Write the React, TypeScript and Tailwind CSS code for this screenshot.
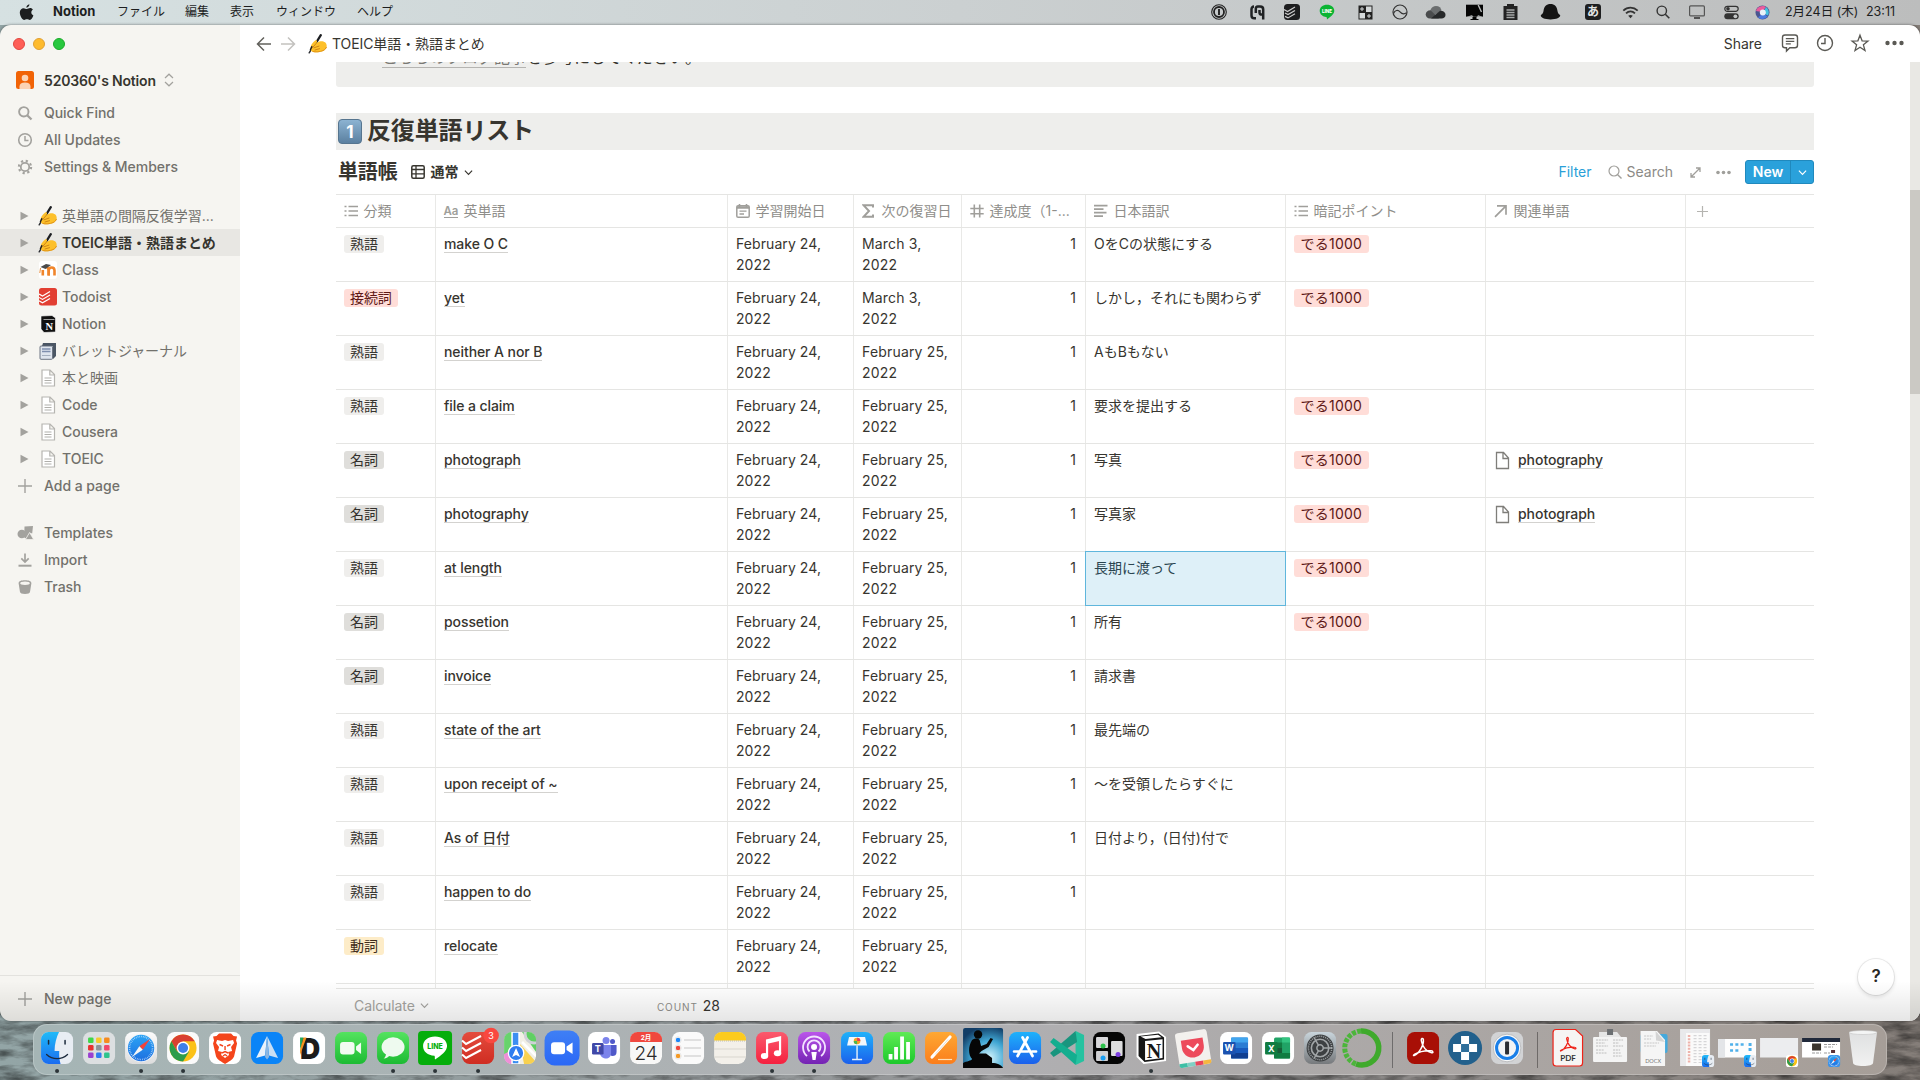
import React from 'react';

/* ---------- shared bits ---------- */

const P = (props: { children: React.ReactNode; w?: number; h?: number; vb?: string; className?: string }) => (
  <svg
    width={props.w ?? 18}
    height={props.h ?? 18}
    viewBox={props.vb ?? '0 0 18 18'}
    fill="none"
    className={`shrink-0 ${props.className ?? ''}`}
  >
    {props.children}
  </svg>
);

const Chevron = ({ w = 9, className = '' }: { w?: number; className?: string }) => (
  <P w={w} h={w} vb="0 0 10 10" className={className}>
    <path d="M1 3l4 4 4-4" stroke="currentColor" strokeWidth="1.3" />
  </P>
);

const WritingHand = () => (
  <P w={19} h={20} vb="0 0 19 20">
    <path d="M12.800 1.200L7 10.500" stroke="#1d1f23" strokeWidth="2.300" strokeLinecap="round" />
    <path d="M6 11L1.200 18.800" stroke="#2e3035" strokeWidth="1.500" strokeLinecap="round" />
    <path d="M2.600 13.500C2.800 11 4.800 8.300 7.200 6.600c1-.7 2.200 0 1.800 1.100l-.6 1.300 3-1.500c3.500-.9 7.300.5 7.300 4.200 0 2.600-1.400 4.300-3.600 5.200-3.300 1.400-7.300 1.700-10 1.100-1.800-.4-2.800-2-2.500-4.500z" fill="#fdc02a" />
    <path d="M8.300 9.300l-3.600 4.200M6 13.800l5-1.700M7 16l4.500-1.300" stroke="#c97f12" strokeWidth=".9" strokeLinecap="round" />
    <path d="M4.500 17.400c3 .9 7.500.5 10.500-.8 1.800-.8 3-2.100 3.500-3.700" stroke="#e09416" strokeWidth="1" />
    <path d="M4 12.300L2.300 16" stroke="#1d1f23" strokeWidth="1.500" />
  </P>
);

const Keycap = () => (
  <P w={24} h={25} vb="0 0 24 25">
    <defs>
      <linearGradient id="kc" x1="0" y1="0" x2="0" y2="1">
        <stop offset="0" stopColor="#8db4d3" />
        <stop offset="1" stopColor="#5a7f9f" />
      </linearGradient>
    </defs>
    <rect x=".5" y=".5" width="23" height="24" rx="3.500" fill="url(#kc)" stroke="#56758f" />
    <text x="12" y="18.500" textAnchor="middle" fontSize="17" fontWeight="700" fill="#fff" fontFamily="Inter">1</text>
  </P>
);

/* ---------- menu bar ---------- */

const statusIcons: { cell: string; icon: React.ReactNode }[] = [
  { cell: 'w-[38px]', icon: <P w={16} h={16} vb="0 0 16 16"><circle cx="8" cy="8" r="7.300" stroke="#222" strokeWidth="1.100" /><circle cx="8" cy="8" r="5" stroke="#222" strokeWidth="1.800" /><path d="M8 5v6" stroke="#222" strokeWidth="1.900" /></P> },
  { cell: 'w-[38px]', icon: <P w={15} h={15} vb="0 0 15 15"><path d="M6 13.300H4.300c-1.800 0-2.800-.9-2.800-2.800V4.300c0-1.700 1-2.700 2.500-2.700M5.800 8V3.500M5.800 4c0-1.500.9-2.400 2-2.400h2.400c2 0 3 1 3 2.900V14.500M9.500 5v2.500c0 1.500.9 2.100 2.300 2.100h1" stroke="#202224" strokeWidth="2.500" /></P> },
  { cell: 'w-[31px]', icon: <P w={16} h={16} vb="0 0 16 16"><rect width="16" height="16" rx="3.500" fill="#1d1e1f" /><path d="M0 5.500l3.500 2L11 3M1 9l3 1.600L11 6.400M1 12.400l3 1.500L11 9.700" stroke="#ccc" strokeWidth="1.200" /></P> },
  { cell: 'w-[40px]', icon: <P w={16} h={16} vb="0 0 16 16"><path d="M8 .8c4.200 0 7.300 2.600 7.300 6 0 3.600-4 6-7.300 8.600-.3-.9.200-1.500-.4-2.200C3.500 12.700.7 10.200.7 6.800c0-3.400 3.100-6 7.300-6z" fill="#0bb433" /><text x="8" y="8.700" fontSize="4.600" fontWeight="800" fill="#fff" textAnchor="middle" fontFamily="Inter">LINE</text></P> },
  { cell: 'w-[37px]', icon: <P w={15} h={15} vb="0 0 15 15"><rect x=".5" y=".5" width="14" height="14" fill="#222" /><rect x="8" y="1.500" width="5.500" height="5.500" fill="#d5d9da" /><rect x="1.500" y="8" width="5.500" height="5.500" fill="#d5d9da" /><path d="M2 4h4M4 2v4M9 11h4M11 9v4" stroke="#d5d9da" strokeWidth="1" /></P> },
  { cell: 'w-[31px]', icon: <P w={16} h={16} vb="0 0 16 16"><circle cx="8" cy="8" r="7" stroke="#333" strokeWidth="1.200" /><path d="M1.500 9.500C3 6 6 5.500 8 7.800s4.300 2.500 6.500 1" stroke="#333" strokeWidth="1.200" /></P> },
  { cell: 'w-[40px]', icon: <P w={21} h={14} vb="0 0 21 14"><path d="M6 10.500C3.500 7 6 1 11 1c3.200 0 5 2 5.500 4.300L10 10z" fill="#6b6e6f" /><path d="M5 13.500c-2.600 0-4.300-1.700-4.300-4 0-2.600 2-4.200 4.800-4.200L14 13.500z" fill="#4a4c4d" /><path d="M6 13.500l9-7.800c3 0 5.500 1.400 5.500 4.200 0 2.100-1.700 3.600-4 3.600z" fill="#262829" /></P> },
  { cell: 'w-[38px]', icon: <P w={19} h={16} vb="0 0 19 16"><path d="M1 .7h17v12H1z" fill="#050505" /><path d="M12 2l4.500 9M7.500 12.700h4V15h2v1h-8v-1h2z" fill="#050505" /><path d="M13.200 1l3.300 7" stroke="#b8bbbb" strokeWidth="1.400" /><path d="M1 12.800l6-1.500 1.500 1.500zM18 12.800l-5-1.500-1 1.500z" fill="#c3c6c6" /></P> },
  { cell: 'w-[34px]', icon: <P w={15} h={16} vb="0 0 15 16"><path d="M.5 2h14v14H.5z" fill="#222" /><rect x="4" y="0" width="7" height="4" fill="#222" /><path d="M3.500 6h8M3.500 8.500h8M3.500 11h8M3.500 13.500h8" stroke="#a5a8a8" strokeWidth="1.300" /></P> },
  { cell: 'w-[47px]', icon: <P w={21} h={16} vb="0 0 21 16"><path d="M10.500 0c4 0 6.500 2.500 7 7 .2 2 1.200 3 2.700 4.300.5 2.200-4 4.200-9.700 4.200S.3 13.500.8 11.300C2.300 10 3.300 9 3.500 7c.5-4.500 3-7 7-7z" fill="#141414" /></P> },
  { cell: 'w-[38px]', icon: <P w={16} h={16} vb="0 0 16 16"><rect width="16" height="16" rx="3" fill="#1e1f20" /><text x="8" y="12.300" textAnchor="middle" fontSize="12" fontWeight="700" fill="#e3e5e5" fontFamily="Noto Sans CJK JP">あ</text></P> },
  { cell: 'w-[36px]', icon: <P w={17} h={13} vb="0 0 17 13"><path d="M1.300 4.600c4.200-4 10.200-4 14.400 0M4 7.300c2.700-2.500 6.300-2.500 9 0" stroke="#333" strokeWidth="1.800" /><path d="M8.500 12.200L6.200 9.800c1.400-1.200 3.200-1.200 4.600 0z" fill="#333" /></P> },
  { cell: 'w-[30px]', icon: <P w={14} h={14} vb="0 0 14 14"><circle cx="5.800" cy="5.800" r="4.700" stroke="#333" strokeWidth="1.400" /><path d="M9.300 9.300l4 4" stroke="#333" strokeWidth="1.600" /></P> },
  { cell: 'w-[38px]', icon: <P w={16} h={14} vb="0 0 16 14"><rect x=".6" y=".9" width="14.800" height="10" rx="1" stroke="#555" strokeWidth="1.200" /><path d="M5 13h6" stroke="#444" strokeWidth="1.800" /></P> },
  { cell: 'w-[30px]', icon: <P w={15} h={15} vb="0 0 15 15"><rect x=".8" y="1.300" width="13.400" height="5" rx="2.500" stroke="#333" strokeWidth="1.200" /><circle cx="4" cy="3.800" r="1.800" fill="#333" /><rect x=".3" y="8.300" width="14.400" height="6" rx="3" fill="#333" /><circle cx="11.400" cy="11.300" r="1.900" fill="#c3c6c6" /></P> },
  { cell: 'w-[32px]', icon: <P w={15} h={15} vb="0 0 15 15"><circle cx="7.500" cy="7.500" r="7" fill="#4a5590" /><path d="M1 6a6.600 6.600 0 0 1 10-4L7 7z" fill="#ea5c9c" /><path d="M11 2a6.700 6.700 0 0 1 2 8.500L8 8z" fill="#45c3e0" /><path d="M3 12.500a6.500 6.500 0 0 0 9.500-1L8 8z" fill="#4b7be0" /><circle cx="7.800" cy="7.500" r="3" fill="#e9f1f8" /></P> },
];

const MenuBar = () => (
  <header className="flex h-[25px] shrink-0 items-start bg-linear-to-r from-[#d6e1e2] via-[#cbd0d1] to-[#bcbdbd] text-[12px] text-[#1d1e1f]">
    <div className="flex h-6 w-full items-center whitespace-nowrap">
      <div className="flex w-[53px] justify-center">
        <P w={15} h={17} vb="0 0 15 17">
          <path d="M10.400.3c.1 1.700-1.300 3.400-3 3.400C7.200 2.100 8.700.5 10.400.3zM13.900 5.600c-2.300 1.500-2 4.700.5 5.800-.7 2-2.100 4.500-3.600 4.500-1 0-1.500-.7-2.800-.7s-1.900.7-2.800.7C3.300 15.900.8 12 .8 8.600.8 5.900 2.600 4.200 4.600 4.200c1.300 0 2.200.8 3.200.8.900 0 1.900-.9 3.400-.9 1.100 0 2.100.6 2.700 1.500z" fill="#1d1e1f" />
        </P>
      </div>
      <span className="w-[64px] text-[13px] font-bold">Notion</span>
      <span className="w-[68px]">ファイル</span>
      <span className="w-[45px]">編集</span>
      <span className="w-[46px]">表示</span>
      <span className="w-[81px]">ウィンドウ</span>
      <span>ヘルプ</span>
      <div className="ml-auto flex">
        {statusIcons.map((s, i) => (
          <div key={i} className={`flex items-center justify-center ${s.cell}`}>{s.icon}</div>
        ))}
      </div>
      <span className="ml-[7px] w-[81px] text-[12.500px]">2月24日 (木)</span>
      <span className="w-[54px] text-[12.500px]">23:11</span>
    </div>
  </header>
);

/* ---------- sidebar ---------- */

const grey = '#a3a29e';
const navTop = [
  { label: 'Quick Find', icon: <P w={16} h={16} vb="0 0 16 16"><circle cx="6.800" cy="6.800" r="4.700" stroke={grey} strokeWidth="1.900" /><path d="M10.200 10.200l4.300 4.300" stroke={grey} strokeWidth="2.300" /></P> },
  { label: 'All Updates', icon: <P w={16} h={16} vb="0 0 16 16"><circle cx="8" cy="8" r="6.300" stroke={grey} strokeWidth="1.600" /><path d="M8 4v4.500h3.500" stroke={grey} strokeWidth="1.500" /></P> },
  { label: 'Settings & Members', icon: <P w={16} h={16} vb="0 0 16 16"><circle cx="8" cy="8" r="4.200" stroke={grey} strokeWidth="1.800" /><circle cx="8" cy="8" r="6.100" stroke={grey} strokeWidth="2.200" strokeDasharray="2.200 2.590" /></P> },
];

const DocIcon = () => (
  <P w={18} h={18} vb="0 0 18 18">
    <path d="M3 1h8l4.500 4.500V17H3zM10.800 1v5h4.700" fill="#fff" stroke="#b6b5b1" strokeWidth="1.200" />
    <path d="M5.500 9h7M5.500 11.500h7M5.500 14h7" stroke="#b0afab" strokeWidth="1.200" />
  </P>
);

const pages: { label: string; icon: React.ReactNode; style: string }[] = [
  { label: '英単語の間隔反復学習...', icon: <WritingHand />, style: 'font-normal' },
  { label: 'TOEIC単語・熟語まとめ', icon: <WritingHand />, style: 'bg-[#e8e7e3] font-semibold text-[#37352f]' },
  { label: 'Class', style: '', icon: <P><rect width="18" height="18" rx="3" fill="#fff" /><path d="M3.800 14.500V9M9.700 14.500V9.500c0-2 1-3 2.900-3s2.900 1 2.900 3v5" stroke="#f0852b" strokeWidth="2.600" /><path d="M9.700 14.500V9.500c0-1.500-.7-2.500-2-2.900" stroke="#f0852b" strokeWidth="2.600" /><path d="M1.500 6L7 3l5 1-5.500 4z" fill="#4a4a4a" /><path d="M1.500 7L.8 12" stroke="#e8903f" /></P> },
  { label: 'Todoist', style: '', icon: <P><rect width="18" height="17.500" rx="2.500" fill="#e23f32" /><path d="M0 6l3.500 2L11 3.600M0 9.400l3.500 2L11 7M0 12.800l3.500 2L11 10.400" stroke="#fff" strokeWidth="1.200" /></P> },
  { label: 'Notion', style: '', icon: <P><path d="M2 1l11-.5 3.500 2.500v14L5 17.500 2 14z" fill="#111" stroke="#fff" strokeWidth=".6" /><path d="M4.500 4.500h11" stroke="#ddd" strokeWidth=".7" /><text x="10.300" y="14.800" textAnchor="middle" fontSize="10.500" fontWeight="700" fill="#fff" fontFamily="Liberation Serif">N</text></P> },
  { label: 'バレットジャーナル', style: 'font-normal', icon: <P><path d="M4 1l13 0v13l-3 3V4H3z" fill="#4b5664" /><rect x="1" y="4" width="12.500" height="13.300" rx="1" fill="#dfe5ee" stroke="#5d6876" strokeWidth=".9" /><path d="M3 7h8.500M3 9.500h8.500" stroke="#7f8fae" strokeWidth="1.300" /><path d="M3 13.500h8.500" stroke="#a5afbf" /></P> },
  { label: '本と映画', style: 'font-normal', icon: <DocIcon /> },
  { label: 'Code', style: '', icon: <DocIcon /> },
  { label: 'Cousera', style: '', icon: <DocIcon /> },
  { label: 'TOEIC', style: '', icon: <DocIcon /> },
];

const Plus = () => (
  <P w={16} h={16} vb="0 0 16 16"><path d="M8 1v14M1 8h14" stroke={grey} strokeWidth="1.400" /></P>
);

const navBottom = [
  { label: 'Templates', icon: <P w={17} h={16} vb="0 0 17 16"><circle cx="4.800" cy="9" r="4.300" fill={grey} /><path d="M7.500 1.500l8.500-.5-.8 7.500-2.700-1-3.300 6-2-1z" fill={grey} /><path d="M12.600 7.500l4 7H8.400z" fill={grey} stroke="#f6f5f1" strokeWidth=".7" /></P> },
  { label: 'Import', icon: <P w={16} h={16} vb="0 0 16 16"><path d="M8 1.500v8.200M4.300 6.300L8 10l3.700-3.700" stroke={grey} strokeWidth="1.700" /><path d="M1.500 13.700h13" stroke={grey} strokeWidth="2" /></P> },
  { label: 'Trash', icon: <P w={16} h={16} vb="0 0 16 16"><path d="M1.600 4.300C1.600 2 4.200 1.200 8 1.200s6.400.8 6.400 3.100L13 13c-.2 1.300-2 2-5 2s-4.800-.7-5-2z" fill={grey} /><ellipse cx="8" cy="4.300" rx="4.800" ry="1.700" fill="#f6f5f1" /></P> },
];

const NavRow = ({ icon, label }: { icon: React.ReactNode; label: string }) => (
  <div className="flex h-[27px] items-center pl-4">
    <div className="flex w-[18px] justify-center">{icon}</div>
    <span className="ml-[10px]">{label}</span>
  </div>
);

const Sidebar = () => (
  <aside className="flex w-60 shrink-0 flex-col bg-[#f6f5f1] text-[14px] font-medium tracking-[-0.030px] text-[#72716c]">
    <div className="flex h-[38px] items-center gap-2 pl-[13px]">
      <i className="size-3 rounded-full border border-[#e2463f] bg-[#fe5f57]" />
      <i className="size-3 rounded-full border border-[#e0a033] bg-[#febb2e]" />
      <i className="size-3 rounded-full border border-[#1aab29] bg-[#28c83f]" />
    </div>
    <div className="flex h-9 items-center pb-0.5 pl-4">
      <P><rect width="18" height="18" rx="2.500" fill="#f16306" /><circle cx="9" cy="7" r="3.300" fill="#fbd3b4" /><path d="M3.500 18v-2.500c0-2.500 2-4 5.500-4s5.500 1.500 5.500 4V18z" fill="#fbd3b4" /></P>
      <span className="ml-[10px] font-semibold tracking-[-0.170px] text-[#37352f]">520360's Notion</span>
      <P w={10} h={14} vb="0 0 10 14" className="ml-2"><path d="M1 5l4-3.800L9 5M1 9l4 3.800L9 9" stroke="#a3a29e" strokeWidth="1.200" /></P>
    </div>
    {navTop.map((n) => <NavRow key={n.label} {...n} />)}
    <div className="mt-[22px]">
      {pages.map((p) => (
        <div key={p.label} className={`flex h-[27px] items-center whitespace-nowrap pl-5 ${p.style}`}>
          <P w={9} h={10} vb="0 0 9 10"><path d="M.5.700L8.500 5 .5 9.300z" fill="#a3a29e" /></P>
          <div className="ml-[9px] flex w-[19px] justify-center">{p.icon}</div>
          <span className="ml-[5px]">{p.label}</span>
        </div>
      ))}
      <NavRow icon={<Plus />} label="Add a page" />
    </div>
    <div className="mt-5">
      {navBottom.map((n) => <NavRow key={n.label} {...n} />)}
    </div>
    <div className="mt-auto flex h-[46px] items-center border-t border-[#e3e2de]">
      <NavRow icon={<Plus />} label="New page" />
    </div>
  </aside>
);

/* ---------- table ---------- */

const hg = '#a09f9b';
const ListIcon = <P w={14} h={14} vb="0 0 14 14"><path d="M4.500 2.500H14M4.500 7H14M4.500 11.500H14" stroke={hg} strokeWidth="1.600" /><path d="M.5 2.500h2M.5 7h2M.5 11.500h2" stroke={hg} strokeWidth="1.600" /></P>;

const columns: { w: string; label: string; gap: string; icon: React.ReactNode }[] = [
  { w: 'w-[100px]', gap: 'ml-[5px]', label: '分類', icon: ListIcon },
  { w: 'w-[292px]', gap: 'ml-[5px]', label: '英単語', icon: <span className="border-b-[1.500px] border-[#a09f9b] text-[11.500px] leading-[12px] font-semibold text-[#a09f9b]">Aa</span> },
  { w: 'w-[126px]', gap: 'ml-[5px]', label: '学習開始日', icon: <P w={14} h={14} vb="0 0 14 14"><rect x=".8" y="1.800" width="12.400" height="11.400" rx="1.300" stroke={hg} strokeWidth="1.500" /><path d="M1 3.500h12" stroke={hg} strokeWidth="2.500" /><path d="M3.500 0v3M10.500 0v3" stroke={hg} strokeWidth="1.600" /><path d="M3.500 7.200h7M3.500 10h4.500" stroke={hg} strokeWidth="1.300" /></P> },
  { w: 'w-[108px]', gap: 'ml-[5px]', label: '次の復習日', icon: <P w={14} h={14} vb="0 0 14 14"><path d="M11 3.500V1.200H1.500L7 7l-5.500 5.800H11v-2.300" stroke={hg} strokeWidth="2" /></P> },
  { w: 'w-[124px]', gap: 'ml-[5px]', label: '達成度（1-...', icon: <P w={14} h={14} vb="0 0 14 14"><path d="M4.300.5v13M9.700.5v13M.3 4.500h13.400M.3 9.700h13.400" stroke={hg} strokeWidth="1.600" /></P> },
  { w: 'w-[200px]', gap: 'ml-[5px]', label: '日本語訳', icon: <P w={14} h={14} vb="0 0 14 14"><path d="M0 1.700h13.500M0 5.200h9.500M0 8.700h12.500M0 12.200h9" stroke={hg} strokeWidth="1.700" /></P> },
  { w: 'w-[200px]', gap: 'ml-[5px]', label: '暗記ポイント', icon: ListIcon },
  { w: 'w-[200px]', gap: 'ml-[5px]', label: '関連単語', icon: <P w={14} h={14} vb="0 0 14 14"><path d="M1 12.800L11.500 2.300M3 1.800h9v9" stroke={hg} strokeWidth="1.700" /></P> },
];

type Row = { tag: string; name: string; next: string; level: string; ja: string; point?: boolean; rel?: string; selected?: boolean };
const rows: Row[] = [
  { tag: '熟語', name: 'make O C', next: 'March 3,', level: '1', ja: 'OをCの状態にする', point: true },
  { tag: '接続詞', name: 'yet', next: 'March 3,', level: '1', ja: 'しかし，それにも関わらず', point: true },
  { tag: '熟語', name: 'neither A nor B', next: 'February 25,', level: '1', ja: 'AもBもない' },
  { tag: '熟語', name: 'file a claim', next: 'February 25,', level: '1', ja: '要求を提出する', point: true },
  { tag: '名詞', name: 'photograph', next: 'February 25,', level: '1', ja: '写真', point: true, rel: 'photography' },
  { tag: '名詞', name: 'photography', next: 'February 25,', level: '1', ja: '写真家', point: true, rel: 'photograph' },
  { tag: '熟語', name: 'at length', next: 'February 25,', level: '1', ja: '長期に渡って', point: true, selected: true },
  { tag: '名詞', name: 'possetion', next: 'February 25,', level: '1', ja: '所有', point: true },
  { tag: '名詞', name: 'invoice', next: 'February 25,', level: '1', ja: '請求書' },
  { tag: '熟語', name: 'state of the art', next: 'February 25,', level: '1', ja: '最先端の' },
  { tag: '熟語', name: 'upon receipt of ~', next: 'February 25,', level: '1', ja: '〜を受領したらすぐに' },
  { tag: '熟語', name: 'As of 日付', next: 'February 25,', level: '1', ja: '日付より，(日付)付で' },
  { tag: '熟語', name: 'happen to do', next: 'February 25,', level: '1', ja: '' },
  { tag: '動詞', name: 'relocate', next: 'February 25,', level: '', ja: '' },
];

const tagColors: Record<string, string> = {
  熟語: 'bg-[#efeeec] text-[#373530]',
  接続詞: 'bg-[#ffddd8] text-[#5d1715]',
  名詞: 'bg-[#dfdedb] text-[#32302c]',
  動詞: 'bg-[#fdecc8] text-[#402c1b]',
};

const Tag = ({ color, children }: { color: string; children: React.ReactNode }) => (
  <span className={`flex h-[18px] items-center rounded-[3px] leading-[18px] ${color}`}>{children}</span>
);

const cell = 'border-r border-[#e9e9e7] px-2 leading-[21px] shrink-0';

const Table = () => (
  <div className="flex w-[1478px] flex-col text-[14px] text-[#37352f]">
    <div className="flex h-[34px] shrink-0 border-y border-[#e5e5e3] font-normal text-[#8f8e8a]">
      {columns.map((c) => (
        <div key={c.label} className={`flex shrink-0 items-center border-r border-[#e9e9e7] pl-[7.500px] whitespace-nowrap ${c.w}`}>
          <div className="flex w-[15px] justify-center">{c.icon}</div>
          <span className={`pb-0.5 ${c.gap}`}>{c.label}</span>
        </div>
      ))}
      <div className="flex w-[128px] items-center pl-[11px]">
        <P w={11} h={11} vb="0 0 11 11"><path d="M5.500 0v11M0 5.500h11" stroke="#b5b4b0" strokeWidth="1.200" /></P>
      </div>
    </div>
    {rows.map((r) => (
      <div key={r.name} className="flex h-[54px] shrink-0 border-b border-[#e5e5e3]">
        <div className={`flex w-[100px] items-start pt-[7px] ${cell}`}>
          <Tag color={`px-[6px] tracking-[-0.100px] ${tagColors[r.tag]}`}>{r.tag}</Tag>
        </div>
        <div className={`w-[292px] pt-[5px] font-medium tracking-[-0.080px] ${cell}`}>
          <span className="border-b border-[#d3d2cf]">{r.name}</span>
        </div>
        <div className={`w-[126px] pt-[5px] tracking-[0.080px] ${cell}`}>February 24,<br />2022</div>
        <div className={`w-[108px] pt-[5px] tracking-[0.180px] ${cell}`}>{r.next}<br />2022</div>
        <div className={`w-[124px] pt-[5px] text-right ${cell}`}><span className="mr-px">{r.level}</span></div>
        <div className={r.selected ? '-mt-px -ml-px h-[55px] w-[201px] shrink-0 border border-[#5fb6dc] bg-[#def0f8] px-2 pt-[5px] leading-[21px] text-[#2b4550]' : `w-[200px] pt-[5px] ${cell}`}>{r.ja}</div>
        <div className={`flex w-[200px] items-start pt-[7px] ${cell}`}>
          {r.point && <Tag color="bg-[#ffddd8] px-[6.500px] tracking-[0.250px] text-[#5d1715]">でる1000</Tag>}
        </div>
        <div className={`flex w-[200px] items-start pt-[5px] font-medium tracking-[-0.050px] ${cell}`}>
          {r.rel && (
            <>
              <P w={16} h={19} vb="0 0 16 19" className="mt-[2px]"><path d="M2.500 1.500h7L14.500 7v10.500h-12zM9 1.500V7.500h5.500" stroke="#7f7e7a" strokeWidth="1.300" /></P>
              <span className="ml-2"><span className="border-b border-[#d3d2cf]">{r.rel}</span></span>
            </>
          )}
        </div>
      </div>
    ))}
    <div className="flex h-[5px] shrink-0 border-b border-[#e5e5e3]">
      {columns.map((c) => <div key={c.label} className={`shrink-0 border-r border-[#e9e9e7] ${c.w}`} />)}
    </div>
    <div className="flex h-8 items-center">
      <div className="flex w-[100px] items-center pl-[18px] tracking-[-0.100px] text-[#a5a4a0]">
        Calculate<Chevron w={9} className="ml-[5px]" />
      </div>
      <div className="flex w-[284px] items-baseline justify-end gap-[5px] pt-px">
        <span className="text-[10px] tracking-[0.900px] text-[#8f8e8a]">COUNT</span>
        <span>28</span>
      </div>
    </div>
  </div>
);

/* ---------- main pane ---------- */

const Main = () => (
  <main className="relative flex min-w-0 flex-1 flex-col bg-white">
    <div className="flex h-[37px] shrink-0 items-center pl-4 text-[14px] text-[#37352f]">
      <P w={16} h={16} vb="0 0 16 16"><path d="M8 1.500L1.500 8 8 14.500M1.500 8H15" stroke="#62615c" strokeWidth="1.500" /></P>
      <P w={16} h={16} vb="0 0 16 16" className="ml-2"><path d="M8 1.500L14.500 8 8 14.500M14.500 8H1" stroke="#c3c2bf" strokeWidth="1.500" /></P>
      <div className="ml-3"><WritingHand /></div>
      <span className="ml-[5px] tracking-[-0.080px]">TOEIC単語・熟語まとめ</span>
      <span className="ml-auto pb-px">Share</span>
      <div className="ml-[18px] flex w-[140px] pb-px text-[#5a5954]">
        <P w={20} h={20} vb="0 0 20 20"><path d="M5 2h10c1.600 0 2.500.9 2.500 2.500v7.700c0 1.600-.9 2.500-2.500 2.500H9.800L6.500 18v-3.300H5c-1.600 0-2.500-.9-2.500-2.500V4.500C2.500 2.900 3.400 2 5 2z" stroke="currentColor" strokeWidth="1.400" /><path d="M5.800 5.700h8.500M5.800 8.300h8.500M5.800 10.900h5" stroke="currentColor" strokeWidth="1.200" /></P>
        <P w={20} h={20} vb="0 0 20 20" className="ml-[15px]"><circle cx="10" cy="10" r="7.500" stroke="currentColor" strokeWidth="1.400" /><path d="M10 5v5.500H6" stroke="currentColor" strokeWidth="1.400" /></P>
        <P w={20} h={20} vb="0 0 20 20" className="ml-[15px]"><path d="M10 2.200l2.100 5.600 5.900.3-4.600 3.700 1.600 5.800-5-3.300-5 3.300 1.600-5.800L2 8.100l5.900-.3z" stroke="currentColor" strokeWidth="1.300" /></P>
        <P w={20} h={20} vb="0 0 20 20" className="ml-[14px]"><circle cx="3.500" cy="10" r="2.200" fill="currentColor" /><circle cx="10.500" cy="10" r="2.200" fill="currentColor" /><circle cx="17.500" cy="10" r="2.200" fill="currentColor" /></P>
      </div>
    </div>

    <div className="flex min-h-0 flex-1">
      <div className="flex min-w-0 flex-1 flex-col overflow-hidden pl-24">
        <div className="flex h-[25px] w-[1478px] shrink-0 items-start overflow-hidden rounded-b-[3px] bg-[#eeeeec] pl-[46px] text-[16px] text-[#37352f]">
          <p className="-mt-[17px] leading-[24px]">
            <span className="border-b border-[#b5b4b1] text-[#7a7974]">こちらのブログ記事</span>を参考にしてください。
          </p>
        </div>
        <h2 className="mt-[26px] flex h-[37px] w-[1478px] shrink-0 items-center bg-[#eeeeec] pl-0.5 text-[24px] leading-none font-bold text-[#37352f]">
          <Keycap />
          <span className="ml-[5px] pb-0.5 tracking-[-0.150px]">反復単語リスト</span>
        </h2>
        <div className="flex h-11 w-[1478px] shrink-0 items-center text-[14px] text-[#37352f]">
          <span className="ml-[2px] text-[20px] font-bold tracking-[-0.150px]">単語帳</span>
          <P w={14} h={14} vb="0 0 14 14" className="ml-[13px]"><rect x=".8" y=".8" width="12.400" height="12.400" rx="1.500" stroke="#37352f" strokeWidth="1.500" /><path d="M1 4.500h12M1 8.800h12M5 1v12" stroke="#37352f" strokeWidth="1.300" /></P>
          <span className="ml-[6px] pb-0.5 font-bold">通常</span>
          <Chevron className="ml-[5px]" />
          <div className="ml-auto flex items-center text-[#8b8a86]">
            <span className="pb-px text-[#2a9fd8]">Filter</span>
            <P w={14} h={14} vb="0 0 14 14" className="ml-4"><circle cx="6" cy="6" r="5" stroke="#a09f9b" strokeWidth="1.200" /><path d="M9.700 9.700l3.800 3.800" stroke="#a09f9b" strokeWidth="1.400" /></P>
            <span className="ml-[5px] pb-px">Search</span>
            <P w={11} h={11} vb="0 0 11 11" className="ml-[17px]"><path d="M1 10L10 1M6 1h4v4M1 6v4h4" stroke="#a09f9b" strokeWidth="1.300" /></P>
            <P w={15} h={5} vb="0 0 15 5" className="ml-[15px]"><circle cx="2" cy="2.500" r="1.800" fill="#a09f9b" /><circle cx="7.500" cy="2.500" r="1.800" fill="#a09f9b" /><circle cx="13" cy="2.500" r="1.800" fill="#a09f9b" /></P>
            <div className="ml-[14px] flex h-6 overflow-hidden rounded-[3px] border border-[#2089bd] bg-[#2aa1db] text-white">
              <span className="flex w-[44px] items-center justify-center pb-px font-semibold">New</span>
              <span className="flex w-[23px] items-center justify-center border-l border-[#2089bd]"><Chevron /></span>
            </div>
          </div>
        </div>
        <Table />
      </div>
      <div className="w-[10px] shrink-0 bg-[#e9e8e4] pt-32">
        <div className="h-[204px] bg-[#cbc9c4]" />
      </div>
    </div>
    <button className="absolute right-[26px] bottom-[26px] size-9 rounded-full bg-white text-[17px] font-semibold text-[#2a2925] shadow-[0_0_0_1px_rgba(15,15,15,0.080),0_2px_4px_rgba(15,15,15,0.120)]">?</button>
  </main>
);

/* ---------- dock ---------- */

const lg = (id: string, a: string, b: string) => (
  <linearGradient id={id} x1="0" y1="0" x2="0" y2="1"><stop offset="0" stopColor={a} /><stop offset="1" stopColor={b} /></linearGradient>
);

const Tile = ({ fill }: { fill: string }) => <rect x="-16" y="-16" width="32" height="32" rx="7.500" fill={fill} />;

const Finder = () => (
  <g>
    <Tile fill="#e8edf3" />
    <path d="M2-16h-10.500a7.500 7.500 0 0 0-7.500 7.500v17a7.500 7.500 0 0 0 7.500 7.500H3.500C2 11 2 6 2.200 3H-2.500C-2.500-4-.5-11 2-16z" fill="url(#finder)" />
    <path d="M-8.500-7.500v3.500M8-7.500v3.500" stroke="#1c2b3d" strokeWidth="1.500" strokeLinecap="round" />
    <path d="M-10.500 6.500c6 5.500 15 5.500 21 0" stroke="#1c2b3d" strokeWidth="1.300" fill="none" strokeLinecap="round" />
  </g>
);
const Chrome = () => (
  <g>
    <circle r="13.500" fill="#fbc116" />
    <path d="M-11.700-6.700A13.500 13.500 0 0 1 11.700-6.700H0L-6 3.500z" fill="#d93f31" />
    <path d="M-11.700-6.700A13.500 13.500 0 0 0 0 13.500L6 3.500H-6z" fill="#2c9c4b" />
    <circle r="6.400" fill="#fff" /><circle r="5" fill="#3f7fe8" />
  </g>
);
const Compass = () => (
  <g>
    <circle r="14" fill="#eef3f7" /><circle r="13.200" fill="url(#safari)" />
    <circle r="11.500" fill="none" stroke="#cfe6fb" strokeWidth="1.600" strokeDasharray=".6 1.200" />
    <path d="M9-9L1.700 1.700-1.700-1.700z" fill="#f2423a" /><path d="M-9 9L1.700 1.700-1.700-1.700z" fill="#f6f6f6" />
  </g>
);
const Acro = ({ c }: { c: string }) => (
  <path d="M-9 7.500C-4 5.500 1-3 .3-8.500c-.4-2-2.600-1-2 1.200C-.8-1.500 3.500 4 8.500 4.800c2 .3 1.800-1.800-.4-2C3 2.300-3.500 3.500-8.300 6.200c-1.400.8-1.600 1.700-.7 1.300z" stroke={c} strokeWidth="1.500" fill="none" />
);

type App = { name: string; art: React.ReactNode; running?: boolean };

const apps: App[] = [
  { name: 'finder', running: true, art: <Finder /> },
  { name: 'launchpad', art: <g><Tile fill="#dcdfe1" />{['#3fd64a', '#f7c92d', '#f58b1f', '#e8302f', '#8e9299', '#f0476b', '#9a3fd0', '#2f7df0', '#2dc48d'].map((c, i) => <rect key={c} x={-11 + (i % 3) * 8} y={-10.5 + Math.floor(i / 3) * 7.5} width="5.500" height="5.500" rx="1.300" fill={c} />)}</g> },
  { name: 'safari', running: true, art: <g><Tile fill="url(#white)" /><Compass /></g> },
  { name: 'chrome', running: true, art: <g><Tile fill="#fafafa" /><Chrome /></g> },
  { name: 'brave', art: <g><Tile fill="#fff" /><path d="M-6-14.500H6l2.500 2.500 3.500.5-1 4 1 3L9 8.500c-1 3-6 5.500-9 7.500-3-2-8-4.500-9-7.500L-12-4.500l1-3-1-4 3.500-.5z" fill="#f4451c" /><path d="M-8-8l5 1 3-1 3 1 5-1 1 3-3 4 1 4-4 1 1 3-4 3-4-3 1-3-4-1 1-4-3-4z" fill="#fff" /><path d="M-5.500-3.500l3.500 1.500M5.500-3.500L2-2M0-2v4M-3 5L0 3.500 3 5M-2 8L0 6.500 2 8" stroke="#f4451c" strokeWidth="1.400" fill="none" /></g> },
  { name: 'spark', art: <g><Tile fill="#0a84f7" /><path d="M0-12L-11 10l9-2.500z" fill="#e9f2fb" /><path d="M0-12L11 10 2 7.500z" fill="#c9dff4" /><path d="M0-12l2 21-2 2.500L-2 9z" fill="#8bb6e0" /></g> },
  { name: 'dic', art: <g><Tile fill="#fff" /><text x="1" y="10.500" textAnchor="middle" fontSize="28" fontWeight="900" fill="#1b1b1b" fontFamily="Inter">D</text><path d="M-9-10.500h3.500L-9 2z" fill="#23a455" /><path d="M-5.500-10.500h3L-9 7V2z" fill="#f7931e" /></g> },
  { name: 'facetime', art: <g><Tile fill="url(#green)" /><rect x="-11" y="-6" width="14.500" height="12.500" rx="3" fill="#f2fbf2" /><path d="M5-1.500l5-4v11.500l-5-4z" fill="#f2fbf2" /></g> },
  { name: 'messages', running: true, art: <g><Tile fill="url(#green)" /><ellipse cx="0" cy="-1" rx="11.500" ry="9.700" fill="#eefaef" /><path d="M-7 5c0 3-1 4.500-2.500 5.500 3 0 5-1.500 6-3z" fill="#eefaef" /></g> },
  { name: 'line', running: true, art: <g><rect x="-17" y="-17" width="34" height="34" rx="4" fill="#05ae0b" /><path d="M0-11.500c7 0 12 4 12 9.500 0 5-6 9.500-12 13.500-.6-1.200.3-2.500-.6-3.800C-7.500 7.500-12 3.500-12-2c0-5.500 5-9.500 12-9.500z" fill="#fff" /><text x="0" y="1" textAnchor="middle" fontSize="7" fontWeight="800" fill="#05ae0b" fontFamily="Inter">LINE</text></g> },
  { name: 'todoist', running: true, art: <g><Tile fill="url(#red)" /><path d="M-16-7.500l4 3.500L3-12M-16-.5l4 3.500L3-5M-16 6.500l4 3.500L3 2" stroke="#fff" strokeWidth="2" fill="none" /><circle cx="13" cy="-12.500" r="7.800" fill="#f9483f" /><text x="13" y="-9.300" textAnchor="middle" fontSize="9" fill="#fff" fontFamily="Inter">3</text></g> },
  { name: 'maps', art: <g clipPath="url(#tileclip)"><Tile fill="#f1efe6" /><path d="M2-16h14v20z" fill="#5fcf63" /><path d="M-16-16h8v20l-8 3z" fill="#68d36c" /><circle cx="14" cy="-14" r="9" fill="none" stroke="#cfd2d6" strokeWidth="3" /><path d="M-16 6l9-4L-2 16h-14z" fill="#ef8fd8" /><path d="M-8-16h7V16h-7z" fill="#3b8ef2" stroke="#fff" strokeWidth="1.500" /><path d="M0-4l16 18v2H4z" fill="#f8d150" /><path d="M2-6L16 8" stroke="#fff" strokeWidth="2.500" /><circle cx="-4" cy="5" r="7.700" fill="#2e7df0" stroke="#fff" strokeWidth="1.300" /><path d="M-4 0l4 9-4-2-4 2z" fill="#fff" /></g> },
  { name: 'zoom', art: <g><rect x="-17.500" y="-17.500" width="35" height="35" rx="10" fill="url(#zoom)" /><rect x="-11" y="-5.700" width="14" height="12" rx="3" fill="#fff" /><path d="M4.500-1.500l6-4v11.500l-6-4z" fill="#fff" /></g> },
  { name: 'teams', art: <g><Tile fill="#fff" /><circle cx="2" cy="-7.500" r="3.500" fill="#7b83eb" /><circle cx="8.500" cy="-6.500" r="2.500" fill="#5059c9" /><path d="M4-3h8.500v7c0 3-2 4-4 4s-4-2-4-4z" fill="#5059c9" /><path d="M-4-3H7v8c0 4-2.500 5.500-5 5.500S-4 9-4 5z" fill="#7b83eb" /><rect x="-12" y="-5" width="11.500" height="11.500" rx="1.200" fill="#4048a8" /><text x="-6.200" y="4" textAnchor="middle" fontSize="9" fontWeight="700" fill="#fff" fontFamily="Inter">T</text></g> },
  { name: 'calendar', art: <g clipPath="url(#tileclip)"><Tile fill="#f8f8f7" /><rect x="-16" y="-16" width="32" height="10" fill="#f0483e" /><text x="0" y="-8.300" textAnchor="middle" fontSize="6.500" fontWeight="700" fill="#fff" fontFamily="Inter, 'Noto Sans CJK JP'">2月</text><text x="0" y="11.500" textAnchor="middle" fontSize="19" fontWeight="300" fill="#2b2b2b" fontFamily="Inter">24</text></g> },
  { name: 'reminders', art: <g><Tile fill="#fafafa" />{[{ c: '#1b86f8', y: -8 }, { c: '#f0483e', y: 0 }, { c: '#f49a26', y: 8 }].map(({ c, y }) => <g key={c}><circle cx="-10" cy={y} r="2.300" fill={c} /><circle cx="-10" cy={y} r="3.200" fill="none" stroke="#dcdcdc" strokeWidth=".7" /><path d={`M-4 ${y}H13`} stroke="#d5d5d5" strokeWidth="1.400" /></g>)}</g> },
  { name: 'notes', art: <g clipPath="url(#tileclip)"><Tile fill="#f3f0ea" /><rect x="-16" y="-16" width="32" height="8.500" fill="#fccb1f" /><path d="M-16-7h32" stroke="#a9a79f" strokeWidth=".7" strokeDasharray="1 1" /><path d="M-16 1h32M-16 9h32" stroke="#d9d6cf" /></g> },
  { name: 'music', running: true, art: <g><Tile fill="url(#music)" /><path d="M-5 7.500V-7.500L8-10.500V5" stroke="#fff" strokeWidth="2.200" fill="none" /><path d="M-5-6L8-9" stroke="#fff" strokeWidth="3.500" /><ellipse cx="-7.500" cy="8" rx="3.700" ry="3" fill="#fff" /><ellipse cx="5.500" cy="5.300" rx="3.700" ry="3" fill="#fff" /></g> },
  { name: 'podcasts', running: true, art: <g><Tile fill="url(#pod)" /><path d="M-7 8a11 11 0 1 1 14 0M-4.500 3.500a6.500 6.500 0 1 1 9 0" stroke="#f3e3ff" strokeWidth="1.800" fill="none" /><circle cy="-1" r="3" fill="#fff" /><path d="M-2.700 4h5.400L1.500 12h-3z" fill="#fff" /></g> },
  { name: 'keynote', art: <g><Tile fill="url(#blue)" /><path d="M-8-11H8l2 8.500h-20z" fill="#f3f7fb" /><circle cy="-7" r="3.300" fill="#f4a323" /><path d="M0-7v-3.300A3.300 3.300 0 0 1 3.300-7z" fill="#e83e57" /><path d="M0-7v3.300A3.300 3.300 0 0 1-3.300-7z" fill="#47b653" /><path d="M0-2.500V11M-5 11.500H5" stroke="#e8f1fa" strokeWidth="1.400" /></g> },
  { name: 'numbers', art: <g><Tile fill="url(#green2)" /><path d="M-8.500 11.500V6M-3 11.500V-1M3 11.500v-23M9 11.500V-6" stroke="#fff" strokeWidth="3.800" /></g> },
  { name: 'pages', art: <g><Tile fill="url(#orange)" /><path d="M-9 9L9-11" stroke="#fff" strokeWidth="3.200" strokeLinecap="round" /><path d="M-6 6.500L7-8.500" stroke="#ddd5cc" strokeWidth=".8" /><path d="M-3 11.500H11" stroke="#ffe0b8" strokeWidth="1.200" /></g> },
  { name: 'kindle', art: <g><rect x="-20" y="-20" width="40" height="40" rx="2" fill="url(#kindle)" /><circle cx="-5" cy="-13.500" r="4.200" fill="#060606" /><path d="M-11-8c5-3 8-1 8 2l1 4 5.500-2 4-6 2.500 1-4.500 8-7 4-2.500 2.500h7L9 10v5c5 0 9 1.500 11 5h-40v-5c4-2 8-2 9-4-4-4-4-13 0-19z" fill="#060606" /></g> },
  { name: 'appstore', art: <g><Tile fill="url(#blue)" /><path d="M2.500-10.500L-7.500 8M-2.500-10.500L7.500 8M-11 3.500H3M7 3.500h4" stroke="#fff" strokeWidth="2.700" strokeLinecap="round" /></g> },
  { name: 'vscode', art: <g><path d="M8.500-17l8.500 4v26l-8.500 4z" fill="#25c2a0" /><path d="M8.500-17L-17 5l3.500 4L10-6z" fill="#19957e" /><path d="M8.500 17L-17-6l3.500-4L10 7z" fill="#14ae8f" /></g> },
  { name: 'widgets', art: <g><Tile fill="#050505" /><rect x="-13" y="-11" width="12" height="11" rx="1" fill="#d8d8da" /><rect x="-13" y="3" width="12" height="10" rx="1" fill="#cfcfd2" /><rect x="2" y="-7" width="11.500" height="15" rx="1" fill="#dededf" /><circle cx="-6" cy="-2" r="2.500" fill="#2ec24c" /><circle cx="9" cy="6.500" r="2.500" fill="#7d3fe0" /><circle cx="-6" cy="10" r="2.500" fill="#1b9df0" /></g> },
  { name: 'notion', running: true, art: <g><path d="M-14.500-14L8-16.500l7 5.500V13L-7.500 16l-7-7z" fill="#fff" /><path d="M-12.500-12L7.500-14.500l5.500 4V11.500L-6.500 14l-6-6z" fill="#161616" /><path d="M-10.500-11.500L7-13.300l3.500 2.500-16 1.800z" fill="#fff" /><path d="M-6-7l17.500-1.800V10L-6 12.300z" fill="#fff" /><text x="2.800" y="9.700" textAnchor="middle" fontSize="20" fontWeight="700" fill="#161616" fontFamily="Liberation Serif">N</text></g> },
  { name: 'pocket', art: <g transform="rotate(-9)"><rect x="-16" y="-17" width="32" height="35" rx="3" fill="#f3f1ee" /><path d="M-16 14h8v4h-6a2 2 0 0 1-2-2z" fill="#3ebfa5" /><path d="M-8 14h8v4h-8z" fill="#7fd0c4" /><path d="M0 14h8v4H0z" fill="#e8455a" /><path d="M8 14h8v2a2 2 0 0 1-2 2H8z" fill="#f5b740" /><path d="M-11-9h22v8c0 6-5 10.500-11 10.500S-11 5-11-1z" fill="#ed4b5c" /><path d="M-5-2.500L0 2l5-4.500" stroke="#fff" strokeWidth="2.600" fill="none" strokeLinecap="round" /></g> },
  { name: 'word', art: <g><Tile fill="#fff" /><rect x="-5" y="-10.500" width="17" height="21" rx="1.500" fill="#2b7cd3" /><path d="M-5-10.500h17v5H-5z" fill="#41a5ee" /><path d="M-5 0h17v5H-5z" fill="#185abd" /><path d="M-5 5h17v5.500H-5z" fill="#103f91" /><rect x="-13" y="-6" width="12.500" height="12.500" rx="1" fill="#1a52b0" /><text x="-6.800" y="3.200" textAnchor="middle" fontSize="9" fontWeight="700" fill="#fff" fontFamily="Inter">W</text></g> },
  { name: 'excel', art: <g><Tile fill="#fff" /><rect x="-4" y="-10.500" width="16" height="21" rx="1.500" fill="#21a366" /><path d="M4-10.500h8v5H4z" fill="#33c481" /><path d="M-4-5.500h8V0h-8zM-4 5h16v5.500H-4z" fill="#107c41" /><path d="M-4 0h8v5h-8z" fill="#185c37" /><rect x="-13" y="-6" width="12.500" height="12.500" rx="1" fill="#107c41" /><text x="-6.800" y="3.500" textAnchor="middle" fontSize="9" fontWeight="700" fill="#fff" fontFamily="Inter">X</text></g> },
  { name: 'preferences', art: <g><Tile fill="url(#pref)" /><circle r="13.500" fill="#3d4042" /><circle r="11.700" fill="none" stroke="#9fa3a6" strokeWidth="1.500" strokeDasharray="1 1" /><circle r="8.700" fill="none" stroke="#a2a6a8" strokeWidth="1.600" /><circle r="3.200" fill="none" stroke="#a2a6a8" strokeWidth="1.500" /><path d="M3 0h9M-1.500 2.700L-6 10.500M-1.500-2.700L-6-10.500" stroke="#a2a6a8" strokeWidth="1.500" /></g> },
  { name: 'anaconda', art: <g fill="none"><path d="M-1-17a17 17 0 1 1-5 33" stroke="#3faa2c" strokeWidth="5.500" /><path d="M-1-17A17 17 0 0 0-6 16" stroke="#4cb53b" strokeWidth="5" strokeDasharray="4 1.300" /></g> },
];

const rightApps: App[] = [
  { name: 'acrobat', art: <g><Tile fill="#a80f06" /><Acro c="#fff" /></g> },
  { name: 'cross', art: <g><circle r="17" fill="#22608c" /><path d="M-4-12h8v8h8v8h-8v8h-8V4h-8v-8h8z" fill="#fff" /><rect x="-4" y="-4" width="8" height="8" fill="#2f6f9b" /></g> },
  { name: '1password', art: <g><Tile fill="#d2d3d5" /><circle r="13.800" fill="#f6f7f8" stroke="#a9abae" strokeWidth=".7" /><circle r="10.500" fill="#f3f4f5" stroke="#1a7fe8" strokeWidth="3" /><rect x="-2" y="-6.500" width="4" height="13" rx="1" fill="#2b2e33" /></g> },
];

const Mini = ({ children }: { children: React.ReactNode }) => <g transform="translate(13 13) scale(.38)">{children}</g>;

const files: App[] = [
  { name: 'pdf', art: <g><path d="M-12-18.500H7.500l7 6.500V15a3 3 0 0 1-3 3h-23.500a3 3 0 0 1-3-3v-30.500a3 3 0 0 1 3-3z" fill="#f6f5f4" stroke="#ee2319" strokeWidth="1.200" /><g transform="translate(0 -3) scale(.8)"><Acro c="#ee2319" /></g><text x="0" y="13" textAnchor="middle" fontSize="8" fontWeight="700" fill="#333" fontFamily="Lato">PDF</text></g> },
  { name: 'archive', art: <g><path d="M-11-16h18l4 5h-22z" fill="#e6e6e6" /><rect x="-17" y="-11" width="34" height="25" rx="1" fill="#f4f4f4" /><path d="M-3-19h6v6h-6z" fill="#6c6f72" /><path d="M-14-8H-2M-14-5h9M-14-2H-2M-14 2h8M-14 5h11M3-8h10M3-5h6M3-2h10M3 2h7M3 5h8M3 8h9" stroke="#b7b7b7" strokeWidth=".9" strokeDasharray="2 .8" /></g> },
  { name: 'docx', art: <g><rect x="-12.500" y="-14" width="27" height="19" rx="2" fill="#45a9dc" /><path d="M-12.500-17H4l8 9v26h-24.500z" fill="#f5f5f5" /><path d="M2.500-17l9.500 11-9-1.500z" fill="#d4d4d4" /><path d="M-9-12H0M-9-9h7M-9-5H6M-9-2H3" stroke="#bbb" strokeWidth=".8" strokeDasharray="2 .8" /><text x="0" y="15.300" textAnchor="middle" fontSize="5.500" fill="#777" fontFamily="Lato">DOCX</text></g> },
  { name: 'win1', art: <g><rect x="-15" y="-19" width="30" height="37" fill="#e9e9eb" /><rect x="-9" y="-15" width="23.500" height="33" fill="#fafafa" /><path d="M-6-13V15" stroke="#eeb3ab" strokeWidth="2.500" strokeDasharray="2 1.200" /><path d="M0-13V15M5-13V15M10-13V15" stroke="#d6d6d8" strokeWidth="3" strokeDasharray="1.300 1.700" /><Mini><Finder /></Mini></g> },
  { name: 'win2', art: <g><rect x="-19" y="-9" width="38" height="18.500" fill="#fdfdfd" /><rect x="-19" y="-9" width="7" height="18.500" fill="#e3e5e8" /><path d="M-7-3.500H9M-7 2.500H3" stroke="#4fb0ea" strokeWidth="2.500" strokeDasharray="3 2.300" /><path d="M13-5V5" stroke="#4fb0ea" strokeWidth="3" strokeDasharray="3 2" /><Mini><Finder /></Mini></g> },
  { name: 'win3', art: <g><rect x="-19" y="-10" width="38" height="19.500" fill="#ecedef" /><Mini><Tile fill="#fff" /><Chrome /></Mini></g> },
  { name: 'win4', art: <g><rect x="-19" y="-10" width="38" height="19.500" fill="#fff" /><rect x="-19" y="-10" width="38" height="4" fill="#20293a" /><rect x="-9" y="-4.500" width="9" height="7" fill="#3a342c" /><path d="M3-3.500h13M3-1h9M-9 5H0M3 5h6" stroke="#999" strokeWidth="1" strokeDasharray="3 1" /><rect x="10" y="2" width="4" height="3" fill="#5a2f35" /><Mini><Tile fill="#3d93e8" /><Compass /></Mini></g> },
  { name: 'trash', art: <g><path d="M-14-16L-10 15c.3 2 4 3 10 3s9.700-1 10-3l4-31z" fill="url(#trash)" /><ellipse cy="-15.500" rx="14" ry="2" fill="#f4f5f5" stroke="#c2c3c3" strokeWidth=".6" /></g> },
];

const Slot = ({ app }: { app: App }) => (
  <svg viewBox="-21 -24 42 51" className="h-[51px] w-[42.110px] shrink-0 overflow-visible">
    {app.art}
    {app.running && <circle cy="23" r="2" fill="#2c3438" />}
  </svg>
);

const Dock = () => (
  <nav className="relative mt-[3px] ml-[33px] flex h-[51px] w-[1853.500px] shrink-0 items-center rounded-[14px] bg-linear-to-r from-[#a5b5b5] via-[#b0b0b3] to-[#a69e98] pl-[2.500px] shadow-[inset_0_0_0_1px_rgba(255,255,255,0.220)]">
    <svg width="0" height="0" className="absolute">
      <defs>
        {lg('finder', '#20baf8', '#1a6cf0')}
        {lg('safari', '#2ba4f5', '#1d6fe0')}
        {lg('white', '#fbfbfb', '#dddddd')}
        {lg('green', '#54e35f', '#1cbb33')}
        {lg('green2', '#5feb55', '#1cc92b')}
        {lg('red', '#e44b3d', '#cf2d22')}
        {lg('zoom', '#3f7ff5', '#2b68f6')}
        {lg('music', '#fb5a6d', '#f5213f')}
        {lg('pod', '#ba55ea', '#7423b3')}
        {lg('blue', '#1fb2fb', '#1b60ec')}
        {lg('orange', '#fea833', '#fb7d1b')}
        {lg('pref', '#c9d5dc', '#76797c')}
        {lg('trash', '#dfe0e1', '#f1f1f1')}
        <radialGradient id="kindle" cx=".65" cy=".75" r=".8"><stop offset="0" stopColor="#d6f6fd" /><stop offset=".55" stopColor="#3fa5d2" /><stop offset="1" stopColor="#123d66" /></radialGradient>
        <clipPath id="tileclip"><rect x="-16" y="-16" width="32" height="32" rx="7.500" /></clipPath>
      </defs>
    </svg>
    {apps.map((a) => <Slot key={a.name} app={a} />)}
    <div className="flex w-[19px] shrink-0 justify-center"><i className="h-9 w-px bg-[#6e6c6c]" /></div>
    {rightApps.map((a) => <Slot key={a.name} app={a} />)}
    <div className="flex w-[19px] shrink-0 justify-center"><i className="h-9 w-px bg-[#6e6a68]" /></div>
    {files.map((a) => <Slot key={a.name} app={a} />)}
  </nav>
);

/* ---------- desktop ---------- */

const Wallpaper = () => (
  <svg className="absolute inset-0" width="1920" height="1080">
    <defs>
      <linearGradient id="wp" x1="0" x2="1" y1="0" y2="0"><stop offset="0" stopColor="#93a5a6" /><stop offset=".5" stopColor="#949597" /><stop offset="1" stopColor="#857e79" /></linearGradient>
      <filter id="rock" x="0" y="0" width="100%" height="100%">
        <feTurbulence type="fractalNoise" baseFrequency="0.035 0.120" numOctaves="4" seed="4" />
        <feColorMatrix values="0 0 0 0 0  0 0 0 0 0  0 0 0 0 0  1 0 0 0 -0.350" />
      </filter>
    </defs>
    <rect width="1920" height="1080" fill="url(#wp)" />
    <rect y="1000" width="1920" height="80" filter="url(#rock)" />
  </svg>
);

export default function App() {
  return (
    <div className="relative h-[1080px] w-[1920px] overflow-hidden bg-[#858688] font-['Inter','Noto_Sans_CJK_JP',sans-serif]">
      <Wallpaper />
      <div className="relative flex h-full flex-col">
        <MenuBar />
        <div className="relative flex h-[996px] shrink-0 overflow-hidden rounded-[11px] shadow-[0_0_3px_rgba(0,0,0,0.500)]">
          <Sidebar />
          <Main />
          <div className="pointer-events-none absolute inset-x-0 bottom-0 h-10 bg-linear-to-t from-black/10 to-transparent" />
        </div>
        <Dock />
      </div>
    </div>
  );
}
